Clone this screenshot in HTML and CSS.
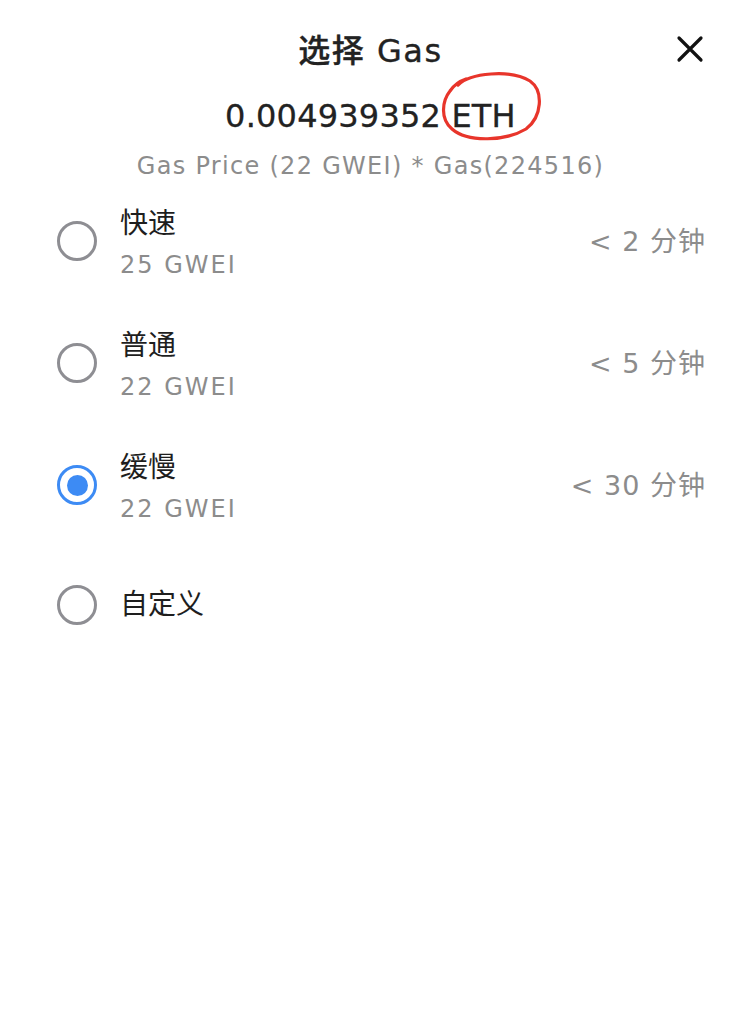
FILE: index.html
```html
<!DOCTYPE html>
<html lang="zh">
<head>
<meta charset="utf-8">
<link rel="stylesheet" href="styles.css">
</head>
<body>
<div class="sheet">
  <header class="head">
    <span></span>
    <h1 class="title">选择 Gas</h1>
    <button class="close" aria-label="close">
      <svg width="28" height="28" viewBox="0 0 28 28"><path d="M3 3 L25 25 M25 3 L3 25" stroke="#111" stroke-width="3.2" stroke-linecap="round"/></svg>
    </button>
  </header>
  <div class="amount">0.004939352 <span class="unit">ETH<svg class="ring" width="104" height="72" viewBox="0 0 104 72"><path d="M18 14 C30 2 70 -2 90 10 C104 20 102 46 86 58 C66 70 28 72 12 58 C0 48 2 30 10 20 C14 14 20 10 26 8" fill="none" stroke="#e8352b" stroke-width="3.2" stroke-linecap="round"/></svg></span></div>
  <div class="formula">Gas Price (22 GWEI) * Gas(224516)</div>

  <ul class="options">
    <li class="opt">
      <span class="radio"></span>
      <div class="info"><div class="name">快速</div><div class="gwei">25 GWEI</div></div>
      <span class="eta">&lt; 2 分钟</span>
    </li>
    <li class="opt">
      <span class="radio"></span>
      <div class="info"><div class="name">普通</div><div class="gwei">22 GWEI</div></div>
      <span class="eta">&lt; 5 分钟</span>
    </li>
    <li class="opt">
      <span class="radio on"></span>
      <div class="info"><div class="name">缓慢</div><div class="gwei">22 GWEI</div></div>
      <span class="eta">&lt; 30 分钟</span>
    </li>
    <li class="opt single">
      <span class="radio"></span>
      <div class="info"><div class="name">自定义</div></div>
    </li>
  </ul>
</div>
</body>
</html>
```
FILE: styles.css
```css
* { box-sizing: border-box; }
html, body { margin: 0; background: #fff; }
body {
  font-family: "DejaVu Sans", "Noto Sans CJK SC", sans-serif;
  color: #222;
}
.sheet { padding: 22px 26px 0 57px; }
.head {
  display: grid;
  grid-template-columns: 1fr auto 1fr;
  align-items: center;
  height: 52px;
}
.title {
  margin: 0;
  font-size: 32px;
  font-weight: 500;
  letter-spacing: 1.5px;
  -webkit-text-stroke: 0.35px #222;
  transform: translateX(-11px);
}
.close {
  justify-self: end;
  background: none;
  border: 0;
  padding: 0;
  margin-right: 2px;
  margin-top: 2px;
  display: flex;
}
.amount {
  text-align: center;
  font-size: 32px;
  font-weight: 500;
  margin-top: 20px;
  line-height: 44px;
  letter-spacing: 0.2px;
  -webkit-text-stroke: 0.3px #222;
  transform: translateX(-11px);
}
.unit { position: relative; }
.ring {
  position: absolute;
  left: -11px;
  top: -26px;
}
.formula {
  text-align: center;
  color: #8c8c8c;
  font-size: 24px;
  letter-spacing: 1.3px;
  margin-top: 14px;
  transform: translateX(-11px);
}
.options { list-style: none; margin: 0; padding: 0; }
.opt {
  display: flex;
  align-items: center;
  height: 122px;
}
.opt.single { height: 118px; }
.radio {
  width: 40px;
  height: 40px;
  border-radius: 50%;
  border: 3.5px solid #8e8e93;
  flex: none;
  display: flex;
  align-items: center;
  justify-content: center;
}
.radio.on { border-color: #3d8bf4; }
.radio.on::after {
  content: "";
  width: 21px;
  height: 21px;
  border-radius: 50%;
  background: #3d8bf4;
}
.info { margin-left: 23px; flex: 1; }
.name { font-size: 28px; line-height: 40px; color: #1e1e1e; }
.gwei { font-size: 24px; color: #8c8c8c; margin-top: 7px; letter-spacing: 2px; }
.eta { font-size: 27px; color: #8c8c8c; margin-bottom: 4px; letter-spacing: 1px; }
```
